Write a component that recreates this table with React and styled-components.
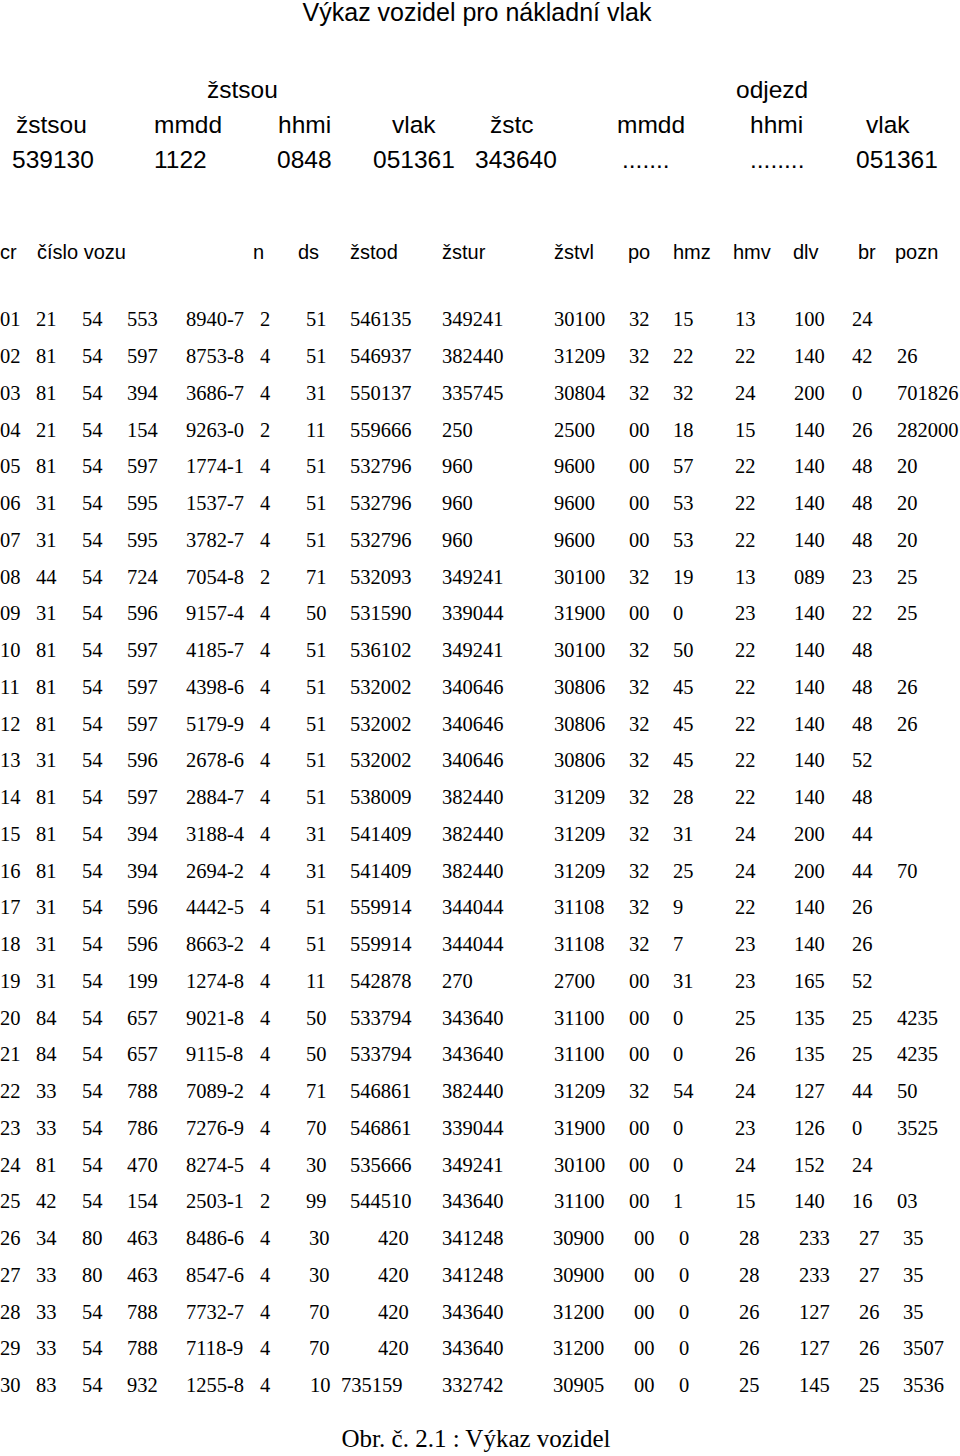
import React from 'react';
import styled, { createGlobalStyle } from 'styled-components';

const Global = createGlobalStyle`
  html, body { margin: 0; padding: 0; background: #fff; }
  body { color: #000; }
`;

const Page = styled.div`
  width: 960px;
  min-height: 1456px;
  display: flex;
  flex-direction: column;
  background: #fff;
`;

const Title = styled.h1`
  margin: 0;
  font: 400 25px/25px "Liberation Sans", Arial, sans-serif;
  text-align: center;
  padding-right: 6px;
`;

const InfoBlock = styled.section`
  margin-top: 46.5px;
  font: 400 24.5px/35px "Liberation Sans", Arial, sans-serif;
  display: flex;
  flex-direction: column;
`;

const InfoLine = styled.div`
  display: grid;
  white-space: nowrap;
  padding-left: ${p => p.$pad}px;
  grid-template-columns: ${p => p.$cols};
`;

const Dots = styled.span`
  letter-spacing: 0;
`;

const TableHead = styled.div`
  margin-top: 57px;
  height: 36.76px;
  display: grid;
  grid-template-columns: 37px 216px 45px 52px 92px 112px 74px 45px 60px 60px 65px 37px auto;
  font: 400 20px/36.76px "Liberation Sans", Arial, sans-serif;
  white-space: nowrap;
`;

const layouts = {
  normal: '36px 46px 45px 59px 74px 46px 44px 92px 112px 75px 44px 62px 59px 58px 45px auto',
  shifted: '36px 46px 45px 59px 74px 49px 69px 64px 111px 81px 45px 60px 60px 60px 44px auto',
  last: '36px 46px 45px 59px 74px 50px 31px 101px 111px 81px 45px 60px 60px 60px 44px auto',
};

const Body = styled.div`
  margin-top: 31.2px;
  display: flex;
  flex-direction: column;
`;

const Row = styled.div`
  height: 36.76px;
  display: grid;
  grid-template-columns: ${p => layouts[p.$layout]};
  font: 400 20.5px/36.76px "Liberation Serif", "Times New Roman", serif;
  white-space: nowrap;
`;

const Cell = styled.span`
  overflow: visible;
`;

const Caption = styled.p`
  margin: 19.6px 0 0;
  font: 400 25px/30px "Liberation Serif", "Times New Roman", serif;
  text-align: center;
  padding-right: 8px;
`;

const rowsText = `01 21 54 553 8940-7 2 51 546135 349241 30100 32 15 13 100 24
02 81 54 597 8753-8 4 51 546937 382440 31209 32 22 22 140 42 26
03 81 54 394 3686-7 4 31 550137 335745 30804 32 32 24 200 0 701826
04 21 54 154 9263-0 2 11 559666 250 2500 00 18 15 140 26 282000
05 81 54 597 1774-1 4 51 532796 960 9600 00 57 22 140 48 20
06 31 54 595 1537-7 4 51 532796 960 9600 00 53 22 140 48 20
07 31 54 595 3782-7 4 51 532796 960 9600 00 53 22 140 48 20
08 44 54 724 7054-8 2 71 532093 349241 30100 32 19 13 089 23 25
09 31 54 596 9157-4 4 50 531590 339044 31900 00 0 23 140 22 25
10 81 54 597 4185-7 4 51 536102 349241 30100 32 50 22 140 48
11 81 54 597 4398-6 4 51 532002 340646 30806 32 45 22 140 48 26
12 81 54 597 5179-9 4 51 532002 340646 30806 32 45 22 140 48 26
13 31 54 596 2678-6 4 51 532002 340646 30806 32 45 22 140 52
14 81 54 597 2884-7 4 51 538009 382440 31209 32 28 22 140 48
15 81 54 394 3188-4 4 31 541409 382440 31209 32 31 24 200 44
16 81 54 394 2694-2 4 31 541409 382440 31209 32 25 24 200 44 70
17 31 54 596 4442-5 4 51 559914 344044 31108 32 9 22 140 26
18 31 54 596 8663-2 4 51 559914 344044 31108 32 7 23 140 26
19 31 54 199 1274-8 4 11 542878 270 2700 00 31 23 165 52
20 84 54 657 9021-8 4 50 533794 343640 31100 00 0 25 135 25 4235
21 84 54 657 9115-8 4 50 533794 343640 31100 00 0 26 135 25 4235
22 33 54 788 7089-2 4 71 546861 382440 31209 32 54 24 127 44 50
23 33 54 786 7276-9 4 70 546861 339044 31900 00 0 23 126 0 3525
24 81 54 470 8274-5 4 30 535666 349241 30100 00 0 24 152 24
25 42 54 154 2503-1 2 99 544510 343640 31100 00 1 15 140 16 03
26 34 80 463 8486-6 4 30 420 341248 30900 00 0 28 233 27 35
27 33 80 463 8547-6 4 30 420 341248 30900 00 0 28 233 27 35
28 33 54 788 7732-7 4 70 420 343640 31200 00 0 26 127 26 35
29 33 54 788 7118-9 4 70 420 343640 31200 00 0 26 127 26 3507
30 83 54 932 1255-8 4 10 735159 332742 30905 00 0 25 145 25 3536`;

const rows = rowsText.split('\n').map(l => l.trim().split(/\s+/));

const layoutFor = n => (n === 30 ? 'last' : n >= 26 ? 'shifted' : 'normal');

const headCols = ['cr', 'číslo vozu', 'n', 'ds', 'žstod', 'žstur', 'žstvl', 'po', 'hmz', 'hmv', 'dlv', 'br', 'pozn'];

export default function App() {
  return (
    <Page>
      <Global />
      <Title>Výkaz vozidel pro nákladní vlak</Title>
      <InfoBlock>
        <InfoLine $pad={207} $cols="529px auto">
          <span>žstsou</span>
          <span>odjezd</span>
        </InfoLine>
        <InfoLine $pad={16} $cols="138px 124px 114px 98px 127px 133px 116px auto">
          <span>žstsou</span>
          <span>mmdd</span>
          <span>hhmi</span>
          <span>vlak</span>
          <span>žstc</span>
          <span>mmdd</span>
          <span>hhmi</span>
          <span>vlak</span>
        </InfoLine>
        <InfoLine $pad={12} $cols="142px 123px 96px 102px 147px 128px 106px auto">
          <span>539130</span>
          <span>1122</span>
          <span>0848</span>
          <span>051361</span>
          <span>343640</span>
          <Dots>.......</Dots>
          <Dots>........</Dots>
          <span>051361</span>
        </InfoLine>
      </InfoBlock>
      <TableHead>
        {headCols.map(h => (
          <Cell key={h}>{h}</Cell>
        ))}
      </TableHead>
      <Body>
        {rows.map(r => (
          <Row key={r[0]} $layout={layoutFor(Number(r[0]))}>
            {r.map((v, i) => (
              <Cell key={i}>{v}</Cell>
            ))}
          </Row>
        ))}
      </Body>
      <Caption>Obr. č. 2.1 : Výkaz vozidel</Caption>
    </Page>
  );
}
